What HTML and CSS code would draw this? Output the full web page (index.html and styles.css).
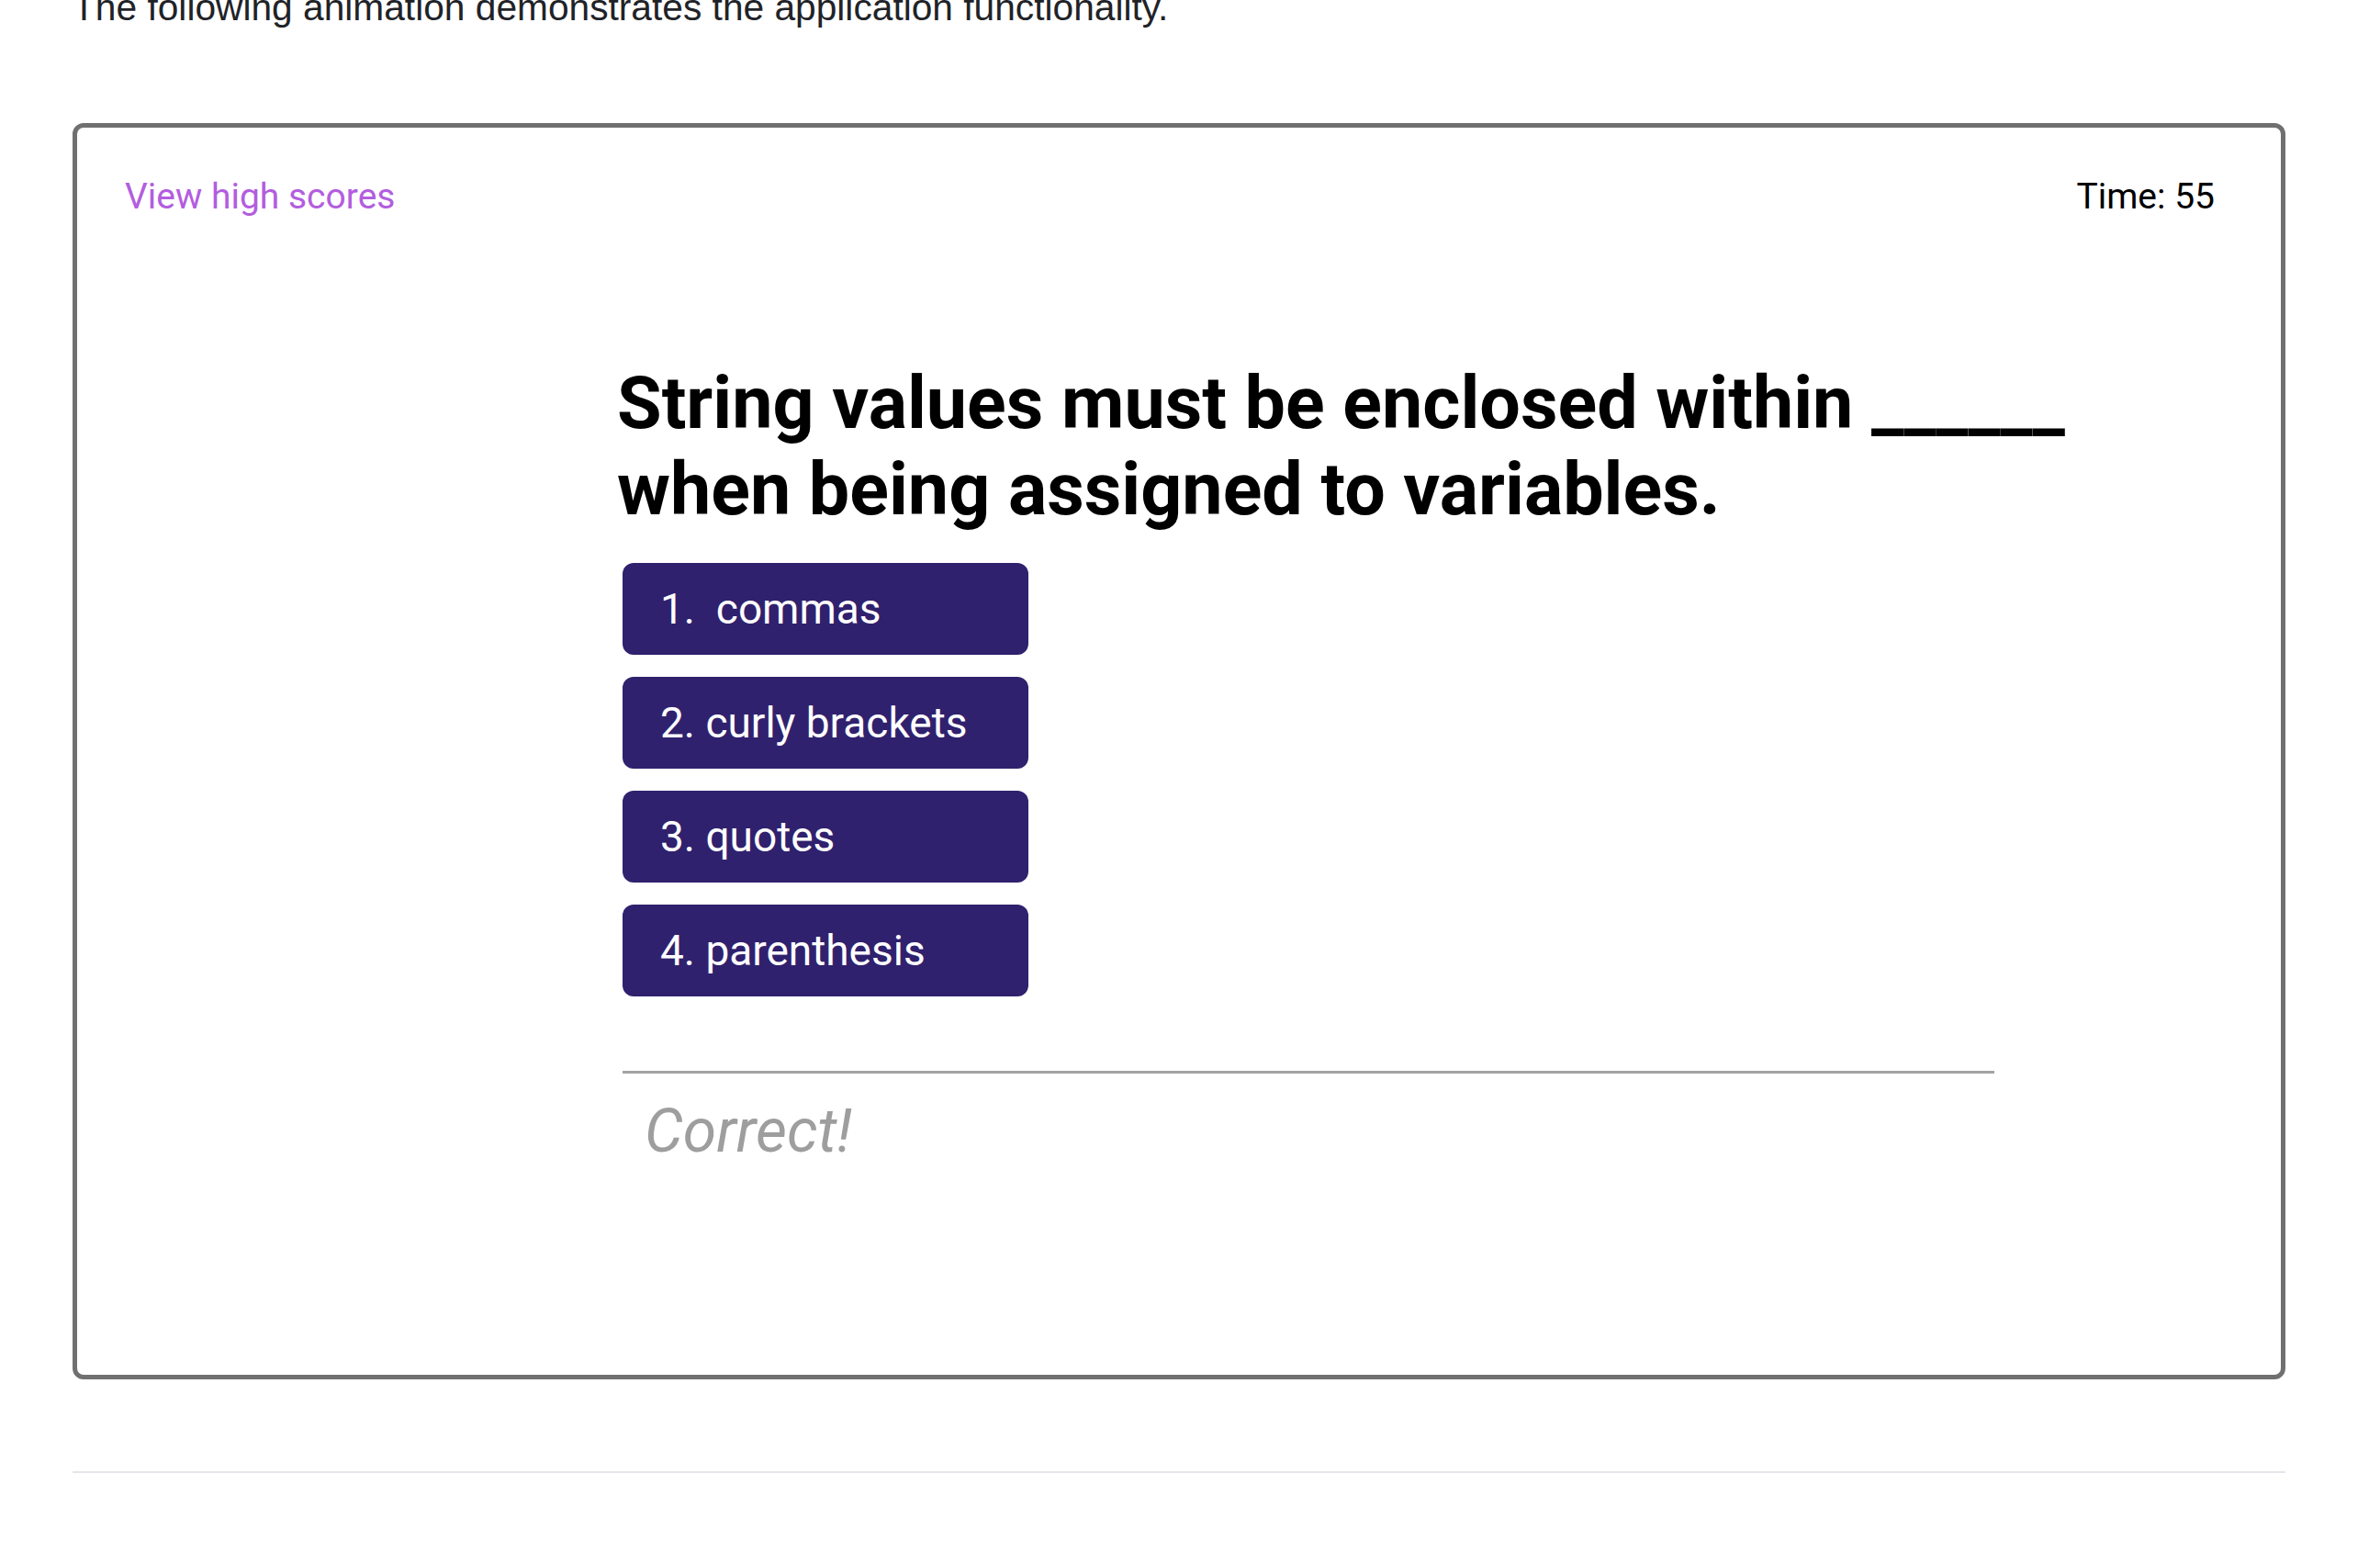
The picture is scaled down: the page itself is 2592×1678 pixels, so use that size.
FILE: index.html
```html
<!DOCTYPE html>
<html lang="en">
<head>
<meta charset="utf-8">
<title>Code Quiz</title>
<link rel="stylesheet" href="styles.css">
</head>
<body>
<div class="page">
  <p class="intro">The following animation demonstrates the application functionality.</p>
  <div class="demo">
    <div class="app">
      <header class="app-header">
        <a class="scores-link" href="#">View high scores</a>
        <span class="timer">Time: 55</span>
      </header>
      <main class="quiz">
        <h2 class="question">String values must be enclosed within ______ when being assigned to variables.</h2>
        <ol class="choices">
          <li><button class="choice">1.&nbsp; commas</button></li>
          <li><button class="choice">2. curly brackets</button></li>
          <li><button class="choice">3. quotes</button></li>
          <li><button class="choice">4. parenthesis</button></li>
        </ol>
        <div class="feedback">
          <p class="feedback-text">Correct!</p>
        </div>
      </main>
    </div>
  </div>
  <div class="section-rule"></div>
</div>
</body>
</html>
```
FILE: styles.css
```css
html, body {
  margin: 0;
  padding: 0;
  background: #ffffff;
}

.page {
  width: 2410px;
  margin-left: 79px;
}

.intro {
  margin: -22px 0 0;
  font-family: "Liberation Sans", Arial, sans-serif;
  font-size: 40.7px;
  line-height: 60px;
  color: #1f2328;
}

.demo {
  margin-top: 96px;
  height: 1368px;
  box-sizing: border-box;
  border: 5px solid #707070;
  border-radius: 12px;
  background: #ffffff;
}

.app {
  padding-top: 53px;
  font-family: Roboto, "Liberation Sans", sans-serif;
}

.app-header {
  display: flex;
  justify-content: space-between;
  padding: 0 72px 0 52px;
  font-size: 39px;
  line-height: 45px;
}

.scores-link {
  color: #b35de0;
  text-decoration: none;
}

.timer {
  color: #000000;
}

.quiz {
  margin-left: 588px;
  margin-top: 155px;
}

.question {
  margin: 0;
  width: 1650px;
  font-size: 79px;
  line-height: 94px;
  font-weight: 700;
  color: #000000;
}

.choices {
  list-style: none;
  margin: 33px 0 0 6px;
  padding: 0;
  display: flex;
  flex-direction: column;
  gap: 24px;
}

.choice {
  display: block;
  width: 442px;
  height: 100px;
  margin: 0;
  padding: 0 0 0 41px;
  border: none;
  border-radius: 12px;
  background: #30216e;
  color: #ffffff;
  font-family: Roboto, "Liberation Sans", sans-serif;
  font-size: 46px;
  line-height: 100px;
  text-align: left;
}

.feedback {
  margin: 81px 0 0 6px;
  width: 1494px;
  border-top: 3px solid #a4a4a4;
}

.feedback-text {
  margin: 23px 0 0;
  padding-left: 24px;
  font-size: 66px;
  line-height: 80px;
  font-style: italic;
  color: #9e9e9e;
}

.section-rule {
  margin-top: 100px;
  height: 2px;
  background: #e3e7eb;
}
```
